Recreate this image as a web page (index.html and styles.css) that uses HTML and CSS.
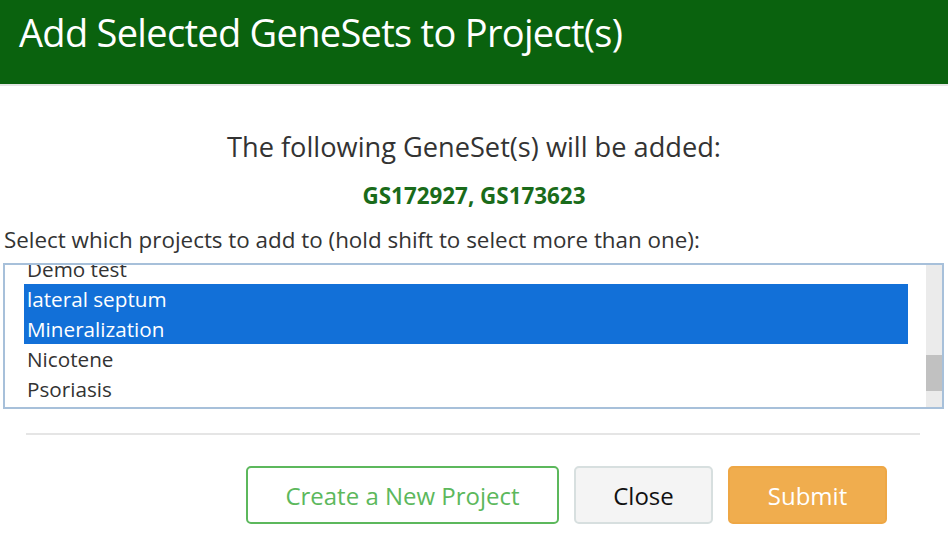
FILE: index.html
```html
<!DOCTYPE html>
<html>
<head>
<meta charset="utf-8">
<link rel="stylesheet" href="styles.css">
</head>
<body>
<div class="modal">
  <header class="modal-header">
    <h1 class="title">Add Selected GeneSets to Project(s)</h1>
  </header>
  <div class="modal-body">
    <h2 class="lead">The following GeneSet(s) will be added:</h2>
    <p class="ids">GS172927, GS173623</p>
    <label class="prompt">Select which projects to add to (hold shift to select more than one):</label>
    <div class="listbox">
      <div class="viewport">
        <ul class="options">
          <li class="opt">Demo test</li>
          <li class="opt selected">lateral septum</li>
          <li class="opt selected">Mineralization</li>
          <li class="opt">Nicotene</li>
          <li class="opt">Psoriasis</li>
        </ul>
      </div>
      <div class="scrollbar"><div class="thumb"></div></div>
    </div>
    <hr class="divider">
    <div class="actions">
      <button class="btn btn-create">Create a New Project</button>
      <button class="btn btn-close">Close</button>
      <button class="btn btn-submit">Submit</button>
    </div>
  </div>
</div>
</body>
</html>
```
FILE: styles.css
```css
* { box-sizing: border-box; }
html, body { margin: 0; padding: 0; background: #fff; }
body {
  width: 948px;
  height: 536px;
  overflow: hidden;
  font-family: "Open Sans", "DejaVu Sans", sans-serif;
  color: #333;
}
.modal-header {
  height: 86px;
  background: #0a620e;
  border-bottom: 2px solid #e5e5e5;
  padding: 10px 0 0 19px;
}
.title {
  margin: 0;
  font-weight: 400;
  font-size: 38px;
  font-stretch: 88%;
  letter-spacing: -0.7px;
  line-height: 44px;
  color: #fff;
}
.lead {
  margin: 43px 0 0;
  text-align: center;
  font-weight: 400;
  font-size: 27.2px;
  font-stretch: 90%;
  line-height: 36px;
  color: #333;
}
.ids {
  margin: 18px 0 0;
  text-align: center;
  font-weight: 700;
  font-size: 22.4px;
  font-stretch: 90%;
  line-height: 26px;
  color: #1a6b1a;
}
.prompt {
  display: block;
  margin: 18px 0 0 4px;
  font-size: 22.4px;
  line-height: 26px;
  color: #333;
}
.listbox {
  display: flex;
  margin: 10px 4px 0 3px;
  height: 146px;
  border: 2px solid #a7c0da;
}
.viewport {
  flex: 1;
  overflow: hidden;
  padding: 0 18px 0 19px;
}
.options {
  list-style: none;
  margin: -11px 0 0;
  padding: 0;
}
.opt {
  height: 30px;
  line-height: 30px;
  font-size: 20.7px;
  padding-left: 3px;
  color: #333;
}
.opt.selected {
  background: #1270d8;
  color: #fff;
}
.scrollbar {
  width: 16px;
  background: #ebebeb;
  padding-top: 90px;
}
.thumb {
  height: 36px;
  background: #c1c1c1;
}
.divider {
  margin: 24px 28px 0 26px;
  border: 0;
  border-top: 2px solid #e5e5e5;
}
.actions {
  display: flex;
  justify-content: flex-end;
  gap: 15px;
  margin: 31px 61px 0 0;
}
.btn {
  height: 58px;
  border-radius: 5px;
  font-family: inherit;
  font-stretch: 90%;
  font-size: 24px;
  cursor: pointer;
}
.btn-create {
  width: 313px;
  background: #fff;
  border: 2px solid #5cb85c;
  color: #5cb85c;
}
.btn-close {
  width: 139px;
  background: #f4f4f4;
  border: 2px solid #d7dfdf;
  color: #111;
}
.btn-submit {
  width: 159px;
  background: #f0ad4e;
  border: 2px solid #eea745;
  color: #fff;
}
```
